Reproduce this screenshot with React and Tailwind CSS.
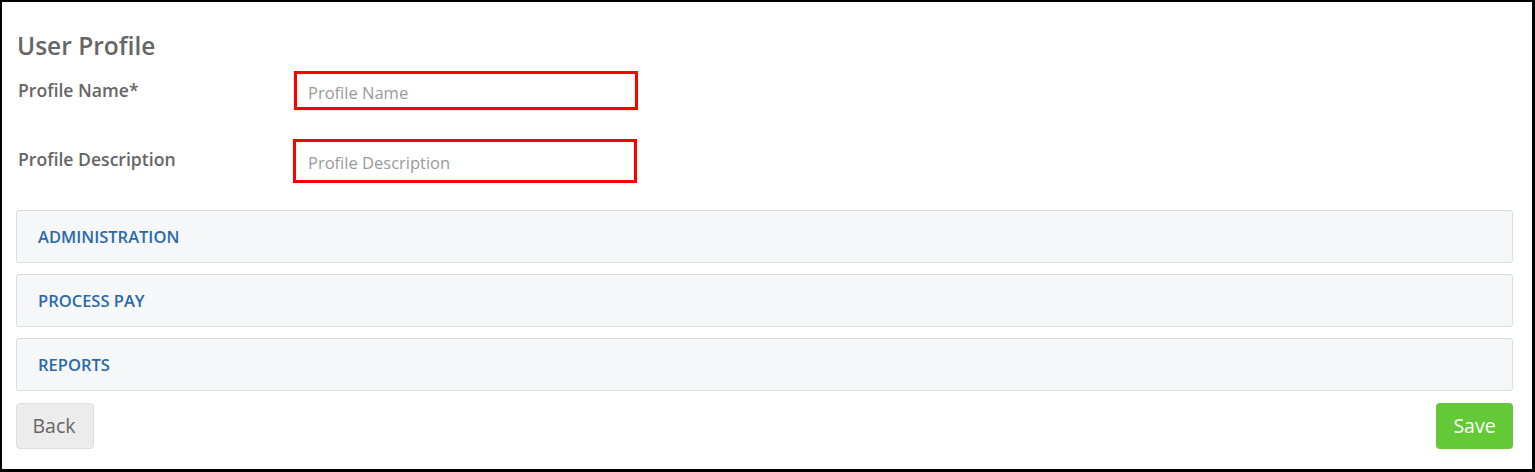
import React from 'react';

const sections = ['ADMINISTRATION', 'PROCESS PAY', 'REPORTS'];

function App() {
  return (
    <div className="w-[1535px] h-[472px] bg-white border-t-2 border-l-2 border-r-[3px] border-b-[3px] border-black font-['Open_Sans',sans-serif] overflow-hidden">
      <div className="px-[14px] pt-[29px]">
        {/* Header */}
        <h1 className="text-[24.5px] leading-[30px] font-semibold text-[#666666] pl-px">User Profile</h1>

        {/* Form */}
        <div className="mt-[10px] flex items-center">
          <label className="w-[277px] pl-[2px] text-[17.6px] font-semibold text-[#666666] -mt-[1px]">Profile Name*</label>
          <input
            placeholder="Profile Name"
            className="ml-px w-[344px] h-[39px] border-[3px] border-[#ff0000] px-[11px] pt-[3px] text-[16.5px] text-[#555] placeholder:text-[#999999] outline-none shadow-[-1px_1px_1px_rgba(0,0,0,0.08)]"
          />
        </div>
        <div className="mt-[29px] flex items-center">
          <label className="w-[277px] pl-[2px] text-[17.6px] font-semibold text-[#666666] -mt-[3px]">Profile Description</label>
          <input
            placeholder="Profile Description"
            className="w-[344px] h-[44px] border-[3px] border-[#ff0000] px-[12px] pt-[2px] text-[16.5px] text-[#555] placeholder:text-[#999999] outline-none"
          />
        </div>

        {/* Sections */}
        <div className="mt-[27px] flex flex-col gap-[11px] w-[1497px]">
          {sections.map((s) => (
            <div
              key={s}
              className="h-[53px] flex items-center pl-[21px] pt-[2px] bg-[#f6f7f9] border border-[#dcdcdc] rounded-[3px]"
            >
              <span className="text-[16.5px] font-semibold text-[#2b69ab]">{s}</span>
            </div>
          ))}
        </div>

        {/* Actions */}
        <div className="mt-[12px] flex justify-between w-[1497px]">
          <button className="w-[78px] h-[46px] rounded-[4px] bg-[#ececec] border border-[#dddddd] text-[19.5px] text-[#666666] pr-[2px]">
            Back
          </button>
          <button className="w-[77px] h-[46px] rounded-[4px] bg-[#63c936] text-[19.5px] text-white">
            Save
          </button>
        </div>
      </div>
    </div>
  );
}

export default App;
